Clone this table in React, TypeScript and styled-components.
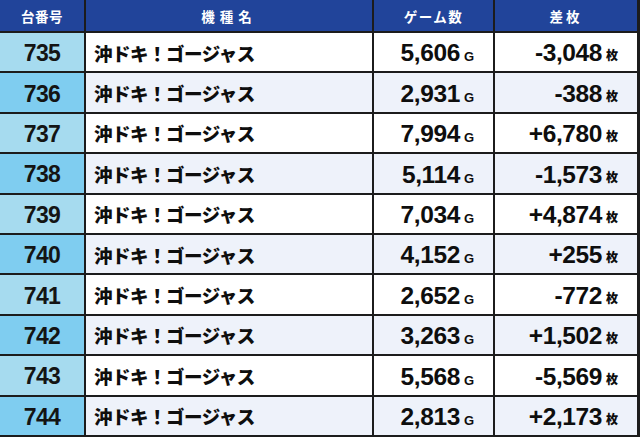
import React from "react";
import styled, { createGlobalStyle } from "styled-components";

const Global = createGlobalStyle`
  html, body { margin: 0; padding: 0; background: #ffffff; }
  body { width: 640px; height: 437px; overflow: hidden; }
`;

const Table = styled.div`
  width: 640px;
  height: 437px;
  box-sizing: border-box;
  display: grid;
  grid-template-columns: 84px 286px 119px 142px;
  grid-template-rows: 31px repeat(10, 1fr);
  column-gap: 2px;
  row-gap: 2px;
  padding: 0 3px 2px 0;
  background: #1c1c1c;
  font-family: "Liberation Sans", "Noto Sans CJK JP", sans-serif;
`;

const HeadCell = styled.div<{ $spacing: number }>`
  background: #21449a;
  color: #ffffff;
  display: flex;
  align-items: center;
  justify-content: center;
  font-family: "Noto Sans CJK JP", sans-serif;
  font-weight: 700;
  font-size: 13.5px;
  letter-spacing: ${(p) => p.$spacing}px;
  padding-top: 1px;
`;

const NumCell = styled.div<{ $even: boolean }>`
  background: ${(p) => (p.$even ? "#7fcdf0" : "#a6dbef")};
  display: flex;
  align-items: center;
  justify-content: center;
  font-family: "Liberation Sans", sans-serif;
  font-weight: 700;
  font-size: 23px;
  letter-spacing: -0.6px;
  color: #141414;
  padding-top: 3px;
`;

const Cell = styled.div<{ $even: boolean; $align: "left" | "right" }>`
  background: ${(p) => (p.$even ? "#eef2fa" : "#ffffff")};
  display: flex;
  align-items: center;
  justify-content: ${(p) => (p.$align === "left" ? "flex-start" : "flex-end")};
  padding: ${(p) => (p.$align === "left" ? "1px 0 0 8px" : "3px 19px 0 0")};
  color: #0e0e0e;
  white-space: nowrap;
`;

const Name = styled.span`
  font-family: "Noto Sans CJK JP", sans-serif;
  font-weight: 900;
  font-size: 18.5px;
  letter-spacing: -0.5px;
`;

const Amount = styled.span`
  line-height: 1;
`;

const Value = styled.span`
  font-family: "Liberation Sans", sans-serif;
  font-weight: 700;
  font-size: 24.5px;
  letter-spacing: -0.4px;
`;

const Unit = styled.span<{ $cjk: boolean }>`
  font-family: ${(p) => (p.$cjk ? '"Noto Sans CJK JP", sans-serif' : '"Liberation Sans", sans-serif')};
  font-weight: ${(p) => (p.$cjk ? 900 : 700)};
  font-size: ${(p) => (p.$cjk ? "12px" : "13px")};
  margin-left: 4px;
  vertical-align: ${(p) => (p.$cjk ? "1px" : "0")};
`;

const rows = [
  { no: "735", games: "5,606", diff: "-3,048" },
  { no: "736", games: "2,931", diff: "-388" },
  { no: "737", games: "7,994", diff: "+6,780" },
  { no: "738", games: "5,114", diff: "-1,573" },
  { no: "739", games: "7,034", diff: "+4,874" },
  { no: "740", games: "4,152", diff: "+255" },
  { no: "741", games: "2,652", diff: "-772" },
  { no: "742", games: "3,263", diff: "+1,502" },
  { no: "743", games: "5,568", diff: "-5,569" },
  { no: "744", games: "2,813", diff: "+2,173" },
];

export default function App() {
  return (
    <>
      <Global />
      <Table>
        <HeadCell $spacing={0.5}>台番号</HeadCell>
        <HeadCell $spacing={5}>機種名</HeadCell>
        <HeadCell $spacing={1.5}>ゲーム数</HeadCell>
        <HeadCell $spacing={3}>差枚</HeadCell>
        {rows.map((r, i) => {
          const even = i % 2 === 1;
          return (
            <React.Fragment key={r.no}>
              <NumCell $even={even}>{r.no}</NumCell>
              <Cell $even={even} $align="left">
                <Name>沖ドキ！ゴージャス</Name>
              </Cell>
              <Cell $even={even} $align="right">
                <Amount>
                  <Value>{r.games}</Value>
                  <Unit $cjk={false}>G</Unit>
                </Amount>
              </Cell>
              <Cell $even={even} $align="right">
                <Amount>
                  <Value>{r.diff}</Value>
                  <Unit $cjk={true}>枚</Unit>
                </Amount>
              </Cell>
            </React.Fragment>
          );
        })}
      </Table>
    </>
  );
}
